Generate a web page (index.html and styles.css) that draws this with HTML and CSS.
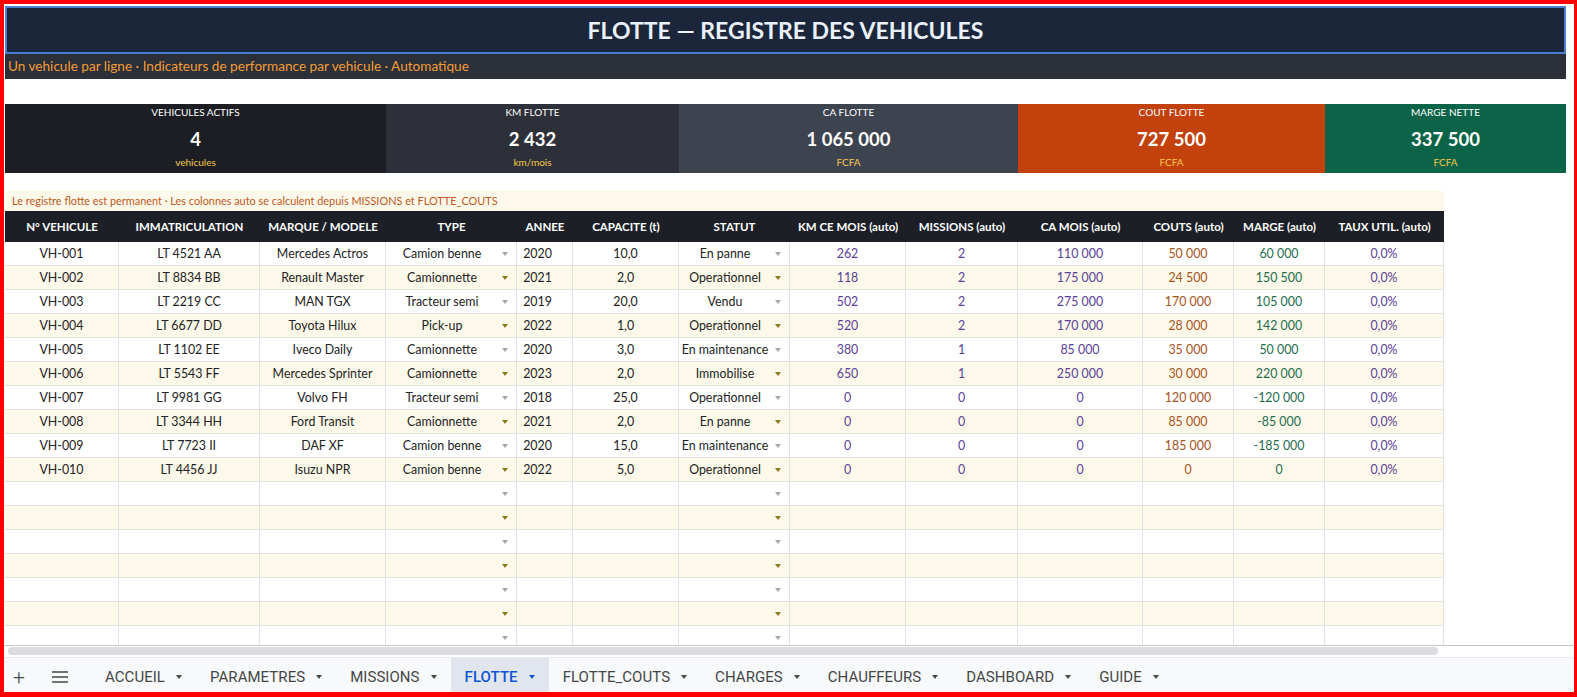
FILE: index.html
```html
<!DOCTYPE html>
<html lang="fr">
<head>
  <meta charset="UTF-8">
  <title>FLOTTE — Registre des vehicules</title>
  <link rel="stylesheet" href="styles.css">
</head>
<body>

  <div class="frame">
    <div class="sheet">
      <div class="title">FLOTTE — REGISTRE DES VEHICULES</div>
      <div class="subtitle">Un vehicule par ligne · Indicateurs de performance par vehicule · Automatique</div>

      <div class="kpis">
        <div class="kpi k1"><span class="kpi-label">VEHICULES ACTIFS</span><span class="kpi-value">4</span><span class="kpi-unit">vehicules</span></div>
        <div class="kpi k2"><span class="kpi-label">KM FLOTTE</span><span class="kpi-value">2 432</span><span class="kpi-unit">km/mois</span></div>
        <div class="kpi k3"><span class="kpi-label">CA FLOTTE</span><span class="kpi-value">1 065 000</span><span class="kpi-unit">FCFA</span></div>
        <div class="kpi k4"><span class="kpi-label">COUT FLOTTE</span><span class="kpi-value">727 500</span><span class="kpi-unit">FCFA</span></div>
        <div class="kpi k5"><span class="kpi-label">MARGE NETTE</span><span class="kpi-value">337 500</span><span class="kpi-unit">FCFA</span></div>
      </div>

      <div class="note">Le registre flotte est permanent · Les colonnes auto se calculent depuis MISSIONS et FLOTTE_COUTS</div>

      <div class="fleet">
        <div class="hrow">
          <span>N° VEHICULE</span><span>IMMATRICULATION</span><span>MARQUE / MODELE</span><span>TYPE</span><span>ANNEE</span><span>CAPACITE (t)</span><span>STATUT</span><span>KM CE MOIS (auto)</span><span>MISSIONS (auto)</span><span>CA MOIS (auto)</span><span>COUTS (auto)</span><span>MARGE (auto)</span><span>TAUX UTIL. (auto)</span>
        </div>

        <div class="row"><span>VH-001</span><span>LT 4521 AA</span><span>Mercedes Actros</span><span class="dd"><span class="v">Camion benne</span><i class="arr"></i></span><span class="yr">2020</span><span>10,0</span><span class="dd"><span class="v">En panne</span><i class="arr"></i></span><span>262</span><span>2</span><span>110 000</span><span>50 000</span><span>60 000</span><span>0,0%</span></div>
        <div class="row"><span>VH-002</span><span>LT 8834 BB</span><span>Renault Master</span><span class="dd"><span class="v">Camionnette</span><i class="arr"></i></span><span class="yr">2021</span><span>2,0</span><span class="dd"><span class="v">Operationnel</span><i class="arr"></i></span><span>118</span><span>2</span><span>175 000</span><span>24 500</span><span>150 500</span><span>0,0%</span></div>
        <div class="row"><span>VH-003</span><span>LT 2219 CC</span><span>MAN TGX</span><span class="dd"><span class="v">Tracteur semi</span><i class="arr"></i></span><span class="yr">2019</span><span>20,0</span><span class="dd"><span class="v">Vendu</span><i class="arr"></i></span><span>502</span><span>2</span><span>275 000</span><span>170 000</span><span>105 000</span><span>0,0%</span></div>
        <div class="row"><span>VH-004</span><span>LT 6677 DD</span><span>Toyota Hilux</span><span class="dd"><span class="v">Pick-up</span><i class="arr"></i></span><span class="yr">2022</span><span>1,0</span><span class="dd"><span class="v">Operationnel</span><i class="arr"></i></span><span>520</span><span>2</span><span>170 000</span><span>28 000</span><span>142 000</span><span>0,0%</span></div>
        <div class="row"><span>VH-005</span><span>LT 1102 EE</span><span>Iveco Daily</span><span class="dd"><span class="v">Camionnette</span><i class="arr"></i></span><span class="yr">2020</span><span>3,0</span><span class="dd"><span class="v">En maintenance</span><i class="arr"></i></span><span>380</span><span>1</span><span>85 000</span><span>35 000</span><span>50 000</span><span>0,0%</span></div>
        <div class="row"><span>VH-006</span><span>LT 5543 FF</span><span>Mercedes Sprinter</span><span class="dd"><span class="v">Camionnette</span><i class="arr"></i></span><span class="yr">2023</span><span>2,0</span><span class="dd"><span class="v">Immobilise</span><i class="arr"></i></span><span>650</span><span>1</span><span>250 000</span><span>30 000</span><span>220 000</span><span>0,0%</span></div>
        <div class="row"><span>VH-007</span><span>LT 9981 GG</span><span>Volvo FH</span><span class="dd"><span class="v">Tracteur semi</span><i class="arr"></i></span><span class="yr">2018</span><span>25,0</span><span class="dd"><span class="v">Operationnel</span><i class="arr"></i></span><span>0</span><span>0</span><span>0</span><span>120 000</span><span>-120 000</span><span>0,0%</span></div>
        <div class="row"><span>VH-008</span><span>LT 3344 HH</span><span>Ford Transit</span><span class="dd"><span class="v">Camionnette</span><i class="arr"></i></span><span class="yr">2021</span><span>2,0</span><span class="dd"><span class="v">En panne</span><i class="arr"></i></span><span>0</span><span>0</span><span>0</span><span>85 000</span><span>-85 000</span><span>0,0%</span></div>
        <div class="row"><span>VH-009</span><span>LT 7723 II</span><span>DAF XF</span><span class="dd"><span class="v">Camion benne</span><i class="arr"></i></span><span class="yr">2020</span><span>15,0</span><span class="dd"><span class="v">En maintenance</span><i class="arr"></i></span><span>0</span><span>0</span><span>0</span><span>185 000</span><span>-185 000</span><span>0,0%</span></div>
        <div class="row"><span>VH-010</span><span>LT 4456 JJ</span><span>Isuzu NPR</span><span class="dd"><span class="v">Camion benne</span><i class="arr"></i></span><span class="yr">2022</span><span>5,0</span><span class="dd"><span class="v">Operationnel</span><i class="arr"></i></span><span>0</span><span>0</span><span>0</span><span>0</span><span>0</span><span>0,0%</span></div>

        <!-- empty rows -->
        <div class="row"><span></span><span></span><span></span><span class="dd"><span class="v"></span><i class="arr"></i></span><span></span><span></span><span class="dd"><span class="v"></span><i class="arr"></i></span><span></span><span></span><span></span><span></span><span></span><span></span></div>
        <div class="row"><span></span><span></span><span></span><span class="dd"><span class="v"></span><i class="arr"></i></span><span></span><span></span><span class="dd"><span class="v"></span><i class="arr"></i></span><span></span><span></span><span></span><span></span><span></span><span></span></div>
        <div class="row"><span></span><span></span><span></span><span class="dd"><span class="v"></span><i class="arr"></i></span><span></span><span></span><span class="dd"><span class="v"></span><i class="arr"></i></span><span></span><span></span><span></span><span></span><span></span><span></span></div>
        <div class="row"><span></span><span></span><span></span><span class="dd"><span class="v"></span><i class="arr"></i></span><span></span><span></span><span class="dd"><span class="v"></span><i class="arr"></i></span><span></span><span></span><span></span><span></span><span></span><span></span></div>
        <div class="row"><span></span><span></span><span></span><span class="dd"><span class="v"></span><i class="arr"></i></span><span></span><span></span><span class="dd"><span class="v"></span><i class="arr"></i></span><span></span><span></span><span></span><span></span><span></span><span></span></div>
        <div class="row"><span></span><span></span><span></span><span class="dd"><span class="v"></span><i class="arr"></i></span><span></span><span></span><span class="dd"><span class="v"></span><i class="arr"></i></span><span></span><span></span><span></span><span></span><span></span><span></span></div>
        <div class="row"><span></span><span></span><span></span><span class="dd"><span class="v"></span><i class="arr"></i></span><span></span><span></span><span class="dd"><span class="v"></span><i class="arr"></i></span><span></span><span></span><span></span><span></span><span></span><span></span></div>
      </div>
    </div>

    <div class="hscroll"><div class="thumb"></div></div>

    <div class="tabs">
      <span class="tab-btn plus">+</span>
      <span class="tab-btn menu">
        <svg width="16" height="12" viewBox="0 0 16 12"><path d="M0 1h16M0 6h16M0 11h16" stroke="#444746" stroke-width="1.5"/></svg>
      </span>
      <span class="tab">ACCUEIL<i></i></span>
      <span class="tab">PARAMETRES<i></i></span>
      <span class="tab">MISSIONS<i></i></span>
      <span class="tab active">FLOTTE<i></i></span>
      <span class="tab">FLOTTE_COUTS<i></i></span>
      <span class="tab">CHARGES<i></i></span>
      <span class="tab">CHAUFFEURS<i></i></span>
      <span class="tab">DASHBOARD<i></i></span>
      <span class="tab">GUIDE<i></i></span>
    </div>
  </div>

</body>
</html>
```

FILE: styles.css
```css
body {
  margin: 0;
  background: #fff;
  font-family: Lato, "Liberation Sans", sans-serif;
}
.frame {
  width: 1577px;
  height: 697px;
  box-sizing: border-box;
  border-style: solid;
  border-color: #ff0000;
  border-width: 4px 3px 5px 4px;
  display: flex;
  flex-direction: column;
  overflow: hidden;
}
.sheet {
  height: 642px;
  box-sizing: border-box;
  padding: 2px 0 0 1px;
  border-bottom: 1px solid #c4c7c5;
  overflow: hidden;
}
.title {
  width: 1561px;
  height: 48px;
  box-sizing: border-box;
  border: 2px solid #4a7fd4;
  background: #1b263b;
  color: #eaf1fb;
  font-size: 23px;
  font-weight: 700;
  display: flex;
  align-items: center;
  justify-content: center;
}
.subtitle {
  width: 1561px;
  height: 25px;
  box-sizing: border-box;
  padding-left: 3px;
  background: #2b2f38;
  color: #f29c38;
  font-size: 13.6px;
  line-height: 25px;
}
.kpis {
  margin-top: 25px;
  height: 69px;
  display: grid;
  grid-template-columns: 381px 293px 339px 307px 241px;
}
.kpi {
  display: flex;
  flex-direction: column;
  align-items: center;
  padding-top: 2px;
  color: #fff;
}
.k1 { background: #1c1e24; }
.k2 { background: #2d3038; }
.k3 { background: #3e4350; }
.k4 { background: #c2410c; }
.k5 { background: #0b6448; }
.kpi-label {
  font-size: 10px;
  line-height: 13px;
}
.kpi-value {
  margin-top: 7px;
  font-size: 18.5px;
  font-weight: 700;
  line-height: 26px;
}
.kpi-unit {
  margin-top: 4px;
  font-size: 10px;
  line-height: 13px;
  color: #f5c84c;
}
.note {
  margin-top: 18px;
  width: 1439px;
  height: 20px;
  box-sizing: border-box;
  padding-left: 7px;
  background: #fdf9ea;
  color: #c0581e;
  font-size: 10.9px;
  line-height: 20px;
}

/* registre */
.fleet {
  width: 1439px;
}
.hrow,
.row {
  display: grid;
  grid-template-columns: 114px 141px 126px 131px 56px 106px 111px 116px 112px 125px 91px 91px 119px;
}
.hrow {
  height: 31px;
  background: #1c1f26;
}
.hrow span {
  display: flex;
  align-items: center;
  justify-content: center;
  color: #fff;
  font-size: 11.5px;
  font-weight: 700;
  white-space: nowrap;
}
.row {
  height: 24px;
  background: #fff;
}
.row:nth-child(odd) {
  background: #fdf9ea;
}
.row > span {
  display: flex;
  align-items: center;
  justify-content: center;
  box-sizing: border-box;
  border-right: 1px solid #e2e2e2;
  border-bottom: 1px solid #e2e2e2;
  font-size: 12.4px;
  color: #222;
  white-space: nowrap;
}
.row > span:nth-child(8),
.row > span:nth-child(9),
.row > span:nth-child(10),
.row > span:nth-child(13) {
  color: #5a3d98;
}
.row > span:nth-child(11) {
  color: #a8521e;
}
.row > span:nth-child(12) {
  color: #1f6b4c;
}
.row > .yr {
  padding-right: 14px;
}
.dd .v {
  flex: 1;
  text-align: center;
}
.arr {
  width: 0;
  height: 0;
  margin: 0 8px 0 4px;
  border-left: 3.5px solid transparent;
  border-right: 3.5px solid transparent;
  border-top: 4px solid #a6a6a6;
}
.row:nth-child(odd) .arr {
  border-top-color: #8a7a1c;
}

/* bas de page */
.hscroll {
  height: 11px;
  padding: 1px 0 0 4px;
  box-sizing: border-box;
}
.thumb {
  width: 1430px;
  height: 8px;
  border-radius: 4px;
  background: #dadce0;
}
.tabs {
  height: 35px;
  box-sizing: border-box;
  padding-top: 4px;
  border-top: 1px solid #e8eaed;
  background: #f8f9fb;
  display: flex;
  align-items: stretch;
  font-family: Roboto, "Liberation Sans", sans-serif;
  font-size: 15px;
  color: #444746;
}
.tab-btn {
  width: 30px;
  display: flex;
  align-items: center;
  justify-content: center;
}
.plus {
  font-size: 21px;
  font-weight: 300;
}
.menu {
  margin: 0 16px 0 11px;
}
.tab {
  display: flex;
  align-items: center;
  padding: 0 14px;
  letter-spacing: 0.05px;
}
.tab i {
  width: 0;
  height: 0;
  margin-left: 11px;
  border-left: 3.5px solid transparent;
  border-right: 3.5px solid transparent;
  border-top: 4px solid #444746;
}
.tab.active {
  margin-top: -4px;
  padding-top: 4px;
  background: #e1e6ee;
  color: #0b57d0;
  font-weight: 500;
}
.tab.active i {
  border-top-color: #0b57d0;
}
```
